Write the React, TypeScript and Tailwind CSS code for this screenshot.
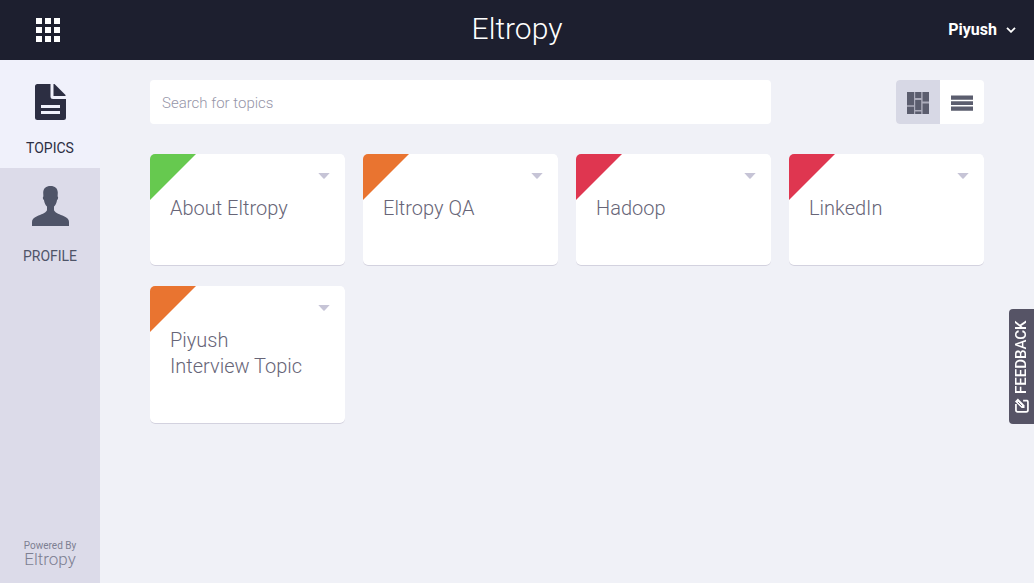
import { useState } from "react";

type Topic = { name: string; corner: string };

const topics: Topic[] = [
  { name: "About Eltropy", corner: "fill-[#66c94f]" },
  { name: "Eltropy QA", corner: "fill-[#e97430]" },
  { name: "Hadoop", corner: "fill-[#df3650]" },
  { name: "LinkedIn", corner: "fill-[#df3650]" },
  { name: "Piyush Interview Topic", corner: "fill-[#e97430]" },
];

function AppsIcon() {
  return (
    <svg width="24" height="24" viewBox="0 0 24 24" fill="currentColor" aria-hidden="true">
      {[0, 9, 18].map((y) =>
        [0, 9, 18].map((x) => <rect key={`${x}-${y}`} x={x} y={y} width="6" height="6" />),
      )}
    </svg>
  );
}

function DocumentIcon() {
  return (
    <svg width="31" height="36" viewBox="0 0 31 36" aria-hidden="true">
      <path
        fill="currentColor"
        fillRule="evenodd"
        d="M2.5 0H15.5V12.5Q15.5 15 18 15H31V33.5Q31 36 28.5 36H2.5Q0 36 0 33.5V2.5Q0 0 2.5 0ZM6 21V24H25V21ZM6 27V30H25V27Z"
      />
      <path fill="currentColor" d="M18.5 0H19.5L30.5 11V12H18.5Z" />
    </svg>
  );
}

function PersonIcon() {
  return (
    <svg width="37" height="40" viewBox="0 0 37 40" fill="currentColor" aria-hidden="true">
      <path d="M18.5 0C23 0 25.6 2.2 25.8 6.5L25.6 10.5C26.5 10.8 26.2 13.4 25 14.2C24.6 17.2 23.4 19.2 22 20.6V24.2C23.5 27.4 28 28.3 32 30.2C35.5 31.8 37 33.4 37 36V40H0V36C0 33.4 1.5 31.8 5 30.2C9 28.3 13.5 27.4 15 24.2V20.6C13.6 19.2 12.4 17.2 12 14.2C10.8 13.4 10.5 10.8 11.4 10.5L11.2 6.5C11.4 2.2 14 0 18.5 0Z" />
    </svg>
  );
}

function TilesIcon() {
  return (
    <svg width="22" height="22" viewBox="0 0 22 22" fill="currentColor" aria-hidden="true">
      <path fillOpacity="0.35" d="M0 0H22V22H0Z" />
      <path d="M0 0H7V13.2H0ZM0 14.8H7V22H0ZM8.2 0H14.2V6H8.2ZM8.2 8H14.2V18H8.2ZM8.2 19.4H14.2V22H8.2ZM15.6 0H22V9.6H15.6ZM15.6 11.4H22V22H15.6Z" />
    </svg>
  );
}

function RowsIcon() {
  return (
    <svg width="22" height="16" viewBox="0 0 22 16" fill="currentColor" aria-hidden="true">
      <path d="M0 0.6H22V4.8H0ZM0 6.2H22V10H0ZM0 11.6H22V15.8H0Z" />
    </svg>
  );
}

function EditIcon() {
  return (
    <svg width="15" height="15" viewBox="0 0 14 14" fill="none" stroke="currentColor" aria-hidden="true">
      <path strokeWidth="1.6" d="M8.5 1.8H2.6Q1 1.8 1 3.4V11.4Q1 13 2.6 13H10Q11.6 13 11.6 11.4V8.5" />
      <path fill="currentColor" stroke="none" d="M4.6 9.8V7.2L10.8 0.9L13.5 3.6L7.2 9.8Z" />
      <path stroke="#565466" strokeWidth="0.8" d="M6.6 7.4L10.4 3.6" />
    </svg>
  );
}

function TopicCard({ name, corner }: Topic) {
  return (
    <article className="relative rounded-[5px] bg-white pt-[41px] pr-10 pb-[45px] pl-5 shadow-[inset_0_-1px_0_#d3d2df]">
      <svg className={`absolute top-0 left-0 rounded-tl-[5px] ${corner}`} width="46" height="46" aria-hidden="true">
        <path d="M0 0H46L0 46Z" />
      </svg>
      <button type="button" aria-label={`Options for ${name}`} className="absolute top-4 right-[15px] py-[3px] text-[#c6c4d6]">
        <svg className="block" width="12" height="6" viewBox="0 0 12 6" fill="currentColor" aria-hidden="true">
          <path d="M0.3 0H11.7L6.6 5.6Q6 6.1 5.4 5.6Z" />
        </svg>
      </button>
      <h2 className="text-[20px] leading-[26px] font-light text-[#676577]">{name}</h2>
    </article>
  );
}

export default function App() {
  const [view, setView] = useState("tiles");

  return (
    <div className="flex min-h-screen flex-col bg-[#f0f1f7] font-['Roboto',sans-serif]">
      <header className="grid h-[60px] grid-cols-[1fr_auto_1fr] items-center bg-[#1d1f2f] text-white">
        <button type="button" aria-label="Apps" className="ml-9 justify-self-start">
          <AppsIcon />
        </button>
        <h1 className="pb-[2px] text-[30px] leading-9 font-light">Eltropy</h1>
        <button type="button" className="mr-[18px] flex items-center gap-[9px] justify-self-end text-[16px] leading-6 font-bold">
          Piyush
          <svg width="10" height="6" viewBox="0 0 10 6" fill="none" stroke="currentColor" strokeWidth="1.8" aria-hidden="true">
            <path d="M1 0.8L5 4.8L9 0.8" />
          </svg>
        </button>
      </header>

      <div className="flex flex-1">
        <aside className="flex w-[100px] shrink-0 flex-col bg-[#dcdbe9]">
          <nav className="text-[14px] leading-5">
            <a href="#topics" className="flex h-[108px] flex-col items-center gap-[18px] bg-[#f0f1fb] pt-6 text-[#2c2e42]">
              <DocumentIcon />
              TOPICS
            </a>
            <a href="#profile" className="flex h-[108px] flex-col items-center gap-5 pt-[18px] text-[#4f5468]">
              <PersonIcon />
              PROFILE
            </a>
          </nav>
          <footer className="mt-auto pb-[15px] text-center text-[#7d7f92]">
            <p className="text-[10px] leading-[10px]">Powered By</p>
            <p className="text-[17px] leading-[17px] font-light">Eltropy</p>
          </footer>
        </aside>

        <main className="grid flex-1 grid-cols-4 content-start items-start gap-x-[18px] px-[50px] pt-5">
          <input
            type="search"
            aria-label="Search for topics"
            placeholder="Search for topics"
            className="col-span-3 mb-[30px] h-11 rounded-[4px] bg-white px-3 pt-[2px] text-[15px] font-light text-[#565466] outline-none placeholder:text-[#9695a8]"
          />
          <div className="flex h-11 justify-self-end overflow-hidden rounded-[4px] bg-white text-[#5b5d6e]">
            <button
              type="button"
              aria-label="Tile view"
              aria-pressed={view === "tiles"}
              onClick={() => setView("tiles")}
              className="flex w-11 items-center justify-center pt-[2px] aria-pressed:bg-[#d7d8e5]"
            >
              <TilesIcon />
            </button>
            <button
              type="button"
              aria-label="List view"
              aria-pressed={view === "list"}
              onClick={() => setView("list")}
              className="flex w-11 items-center justify-center pt-[2px] aria-pressed:bg-[#d7d8e5]"
            >
              <RowsIcon />
            </button>
          </div>
          <section aria-label="Topics" className="col-span-4 grid grid-cols-4 items-start gap-x-[18px] gap-y-5">
            {topics.map((topic) => (
              <TopicCard key={topic.name} {...topic} />
            ))}
          </section>
        </main>
      </div>

      <button
        type="button"
        className="fixed top-[309px] right-0 flex h-[115px] w-[25px] rotate-180 items-center justify-center gap-1 rounded-r-[4px] bg-[#565466] text-[15px] leading-5 font-medium text-white [writing-mode:vertical-rl]"
      >
        <span className="rotate-90">
          <EditIcon />
        </span>
        FEEDBACK
      </button>
    </div>
  );
}
